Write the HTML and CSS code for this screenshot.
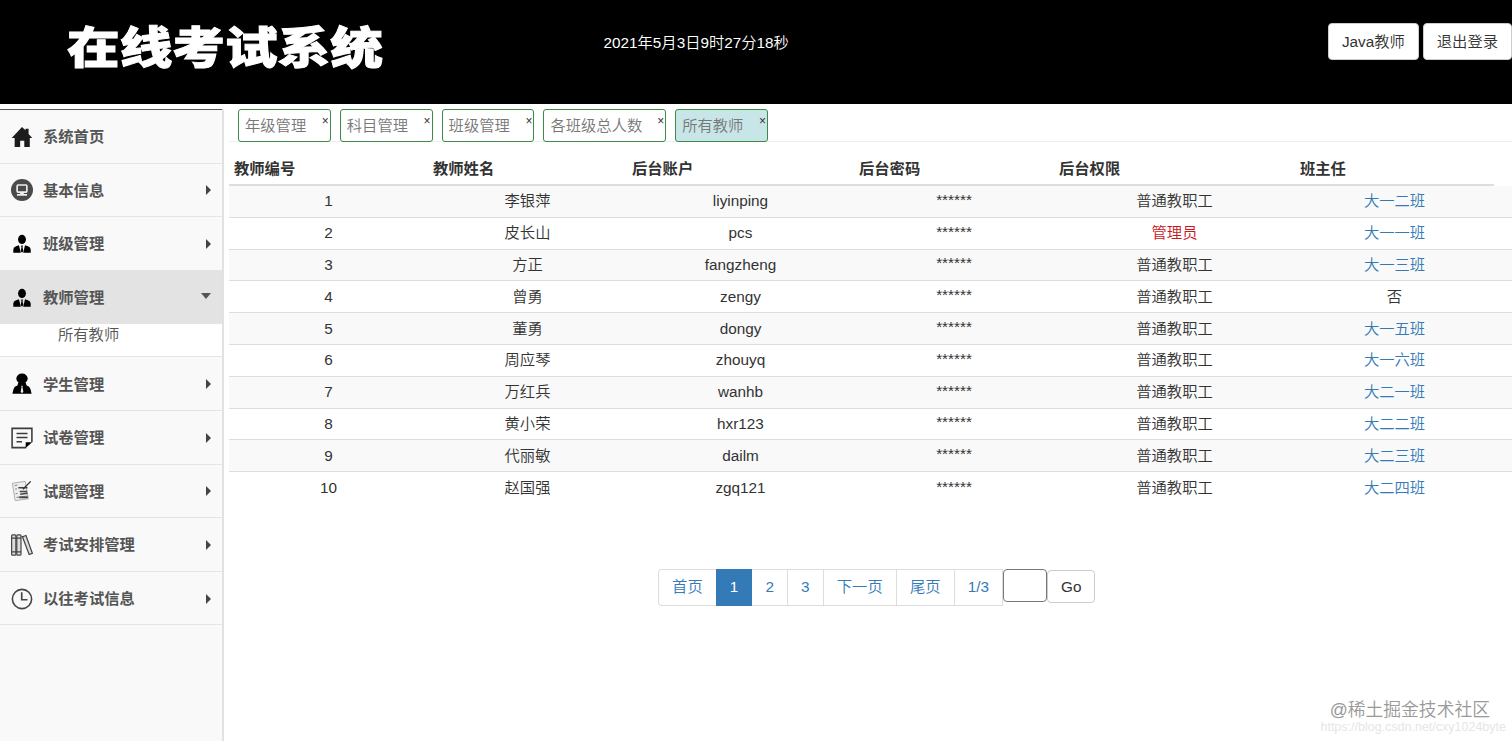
FILE: index.html
```html
<!DOCTYPE html>
<html lang="zh-CN">
<head>
  <meta charset="UTF-8">
  <meta name="viewport" content="width=device-width, initial-scale=1.0">
  <title>在线考试系统</title>
  <link rel="stylesheet" href="styles.css">
</head>
<body>
  <!-- 顶部 -->
  <header class="header">
    <h1 class="logo"><span>在线考试系统</span></h1>
    <div class="time">2021年5月3日9时27分18秒</div>
    <div class="user">
      <button type="button" class="btn">Java教师</button>
      <button type="button" class="btn">退出登录</button>
    </div>
  </header>

  <div class="main">
    <!-- 左侧菜单 -->
    <nav class="sidebar">
      <ul class="menu">
        <li>
          <a class="item">
            <svg viewBox="0 0 24 24"><path fill="#1c1c1c" d="M.8 13 12 1l3.800 3.700V3h3.400v5.600L23.200 13H20.500v10H14.500v-7h-4.500v7H4v-10z"/></svg>
            <span>系统首页</span>
          </a>
        </li>
        <li>
          <a class="item">
            <svg viewBox="0 0 24 24"><circle cx="12" cy="12" r="12" fill="#4a4a4a"/><rect x="6.700" y="6.500" width="10.600" height="7.800" rx="1" fill="none" stroke="#eee" stroke-width="1.800"/><path d="M10 14.500h4v2h-4zM6.500 16.300h11v2h-11z" fill="#eee"/></svg>
            <span>基本信息</span><i class="arrow"></i>
          </a>
        </li>
        <li>
          <a class="item">
            <svg viewBox="0 0 24 24"><ellipse cx="12" cy="7" rx="4.300" ry="5"/><path d="M2.500 21.500v-3.500q0-2.500 3-3.500l3.200-1.200 2 8.200zM21.500 21.500v-3.500q0-2.500-3-3.500l-3.200-1.200-2 8.200zM11 13.700h2l-.4 1.800.8 4-1.400 2-1.400-2 .8-4z"/></svg>
            <span>班级管理</span><i class="arrow"></i>
          </a>
        </li>
        <li>
          <a class="item active">
            <svg viewBox="0 0 24 24"><ellipse cx="12" cy="7" rx="4.300" ry="5"/><path d="M2.500 21.500v-3.500q0-2.500 3-3.500l3.200-1.200 2 8.200zM21.500 21.500v-3.500q0-2.500-3-3.500l-3.200-1.200-2 8.200zM11 13.700h2l-.4 1.800.8 4-1.400 2-1.400-2 .8-4z"/></svg>
            <span>教师管理</span><i class="arrow down"></i>
          </a>
          <ul class="submenu">
            <li>所有教师</li>
          </ul>
        </li>
        <li>
          <a class="item">
            <svg viewBox="0 0 24 24"><ellipse cx="12" cy="6" rx="6.200" ry="5.500"/><path d="M8 10h8l1 3.500q3.500 1 4.200 4l1.300 5h-21l1.300-5q.7-3 4.200-4z"/><path d="m11.200 14h1.600l-.3 1.500 1 5-1.500 1.500-1.500-1.500 1-5z" fill="#eee"/></svg>
            <span>学生管理</span><i class="arrow"></i>
          </a>
        </li>
        <li>
          <a class="item">
            <svg viewBox="0 0 24 24"><path d="M16.500 22.500H1.200V1.500h21.600v15M6 7h12M6 11.500h12M6 16h6" fill="none" stroke="#3c3c3c" stroke-width="1.700"/><path d="M16 23v-6.500h7z"/></svg>
            <span>试卷管理</span><i class="arrow"></i>
          </a>
        </li>
        <li>
          <a class="item">
            <svg viewBox="0 0 24 24"><path d="m1.500 3.500 14-2 3.500 19-14.500 2z" fill="#eee" stroke="#aaa"/><path d="m4 6 3-.5M4.500 10l2-.3M5 15l2-.3M6 19l12-1.500" stroke="#777"/><path d="M8 8.500h10M9.500 12.500h8M9 19h9.500M10 15.500l8-1" stroke="#444" stroke-width="1.800"/><path d="m13 10 8.500-8.500" stroke="#333" stroke-width="1.500"/></svg>
            <span>试题管理</span><i class="arrow"></i>
          </a>
        </li>
        <li>
          <a class="item">
            <svg viewBox="0 0 24 24"><g fill="#ddd" stroke="#444" stroke-width="1.300"><rect x=".7" y="1" width="4.600" height="22" rx="1"/><rect x="6.300" y="1" width="4.600" height="22" rx="1"/><path d="m12.500 3 3.800-1.300 7 19.300-3.500 1.300z"/></g><path d="M.7 4.500h10.200M.7 19.500h10.200M11.500 2.500l2 1" stroke="#444" stroke-width="1.200"/></svg>
            <span>考试安排管理</span><i class="arrow"></i>
          </a>
        </li>
        <li>
          <a class="item">
            <svg viewBox="0 0 24 24"><circle cx="12" cy="12" r="10.500" fill="none" stroke="#444" stroke-width="1.700"/><path d="M11.700 4.500v8.300H18" fill="none" stroke="#444" stroke-width="1.800"/></svg>
            <span>以往考试信息</span><i class="arrow"></i>
          </a>
        </li>
      </ul>
    </nav>

    <!-- 右侧内容 -->
    <section class="content">
      <div class="tabs">
        <div class="tab"><span>年级管理</span><i>×</i></div>
        <div class="tab"><span>科目管理</span><i>×</i></div>
        <div class="tab"><span>班级管理</span><i>×</i></div>
        <div class="tab"><span>各班级总人数</span><i>×</i></div>
        <div class="tab active"><span>所有教师</span><i>×</i></div>
      </div>

      <table class="table">
        <colgroup>
          <col class="w-id"><col class="w-name"><col class="w-account"><col class="w-pwd"><col class="w-role"><col class="w-class"><col class="w-rest">
        </colgroup>
        <thead>
          <tr>
            <th>教师编号</th><th>教师姓名</th><th>后台账户</th><th>后台密码</th><th>后台权限</th><th>班主任</th>
          </tr>
        </thead>
        <tbody>
          <tr><td>1</td><td>李银萍</td><td>liyinping</td><td class="pwd">******</td><td>普通教职工</td><td><a>大一二班</a></td><td></td></tr>
          <tr><td>2</td><td>皮长山</td><td>pcs</td><td class="pwd">******</td><td class="admin">管理员</td><td><a>大一一班</a></td><td></td></tr>
          <tr><td>3</td><td>方正</td><td>fangzheng</td><td class="pwd">******</td><td>普通教职工</td><td><a>大一三班</a></td><td></td></tr>
          <tr><td>4</td><td>曾勇</td><td>zengy</td><td class="pwd">******</td><td>普通教职工</td><td>否</td><td></td></tr>
          <tr><td>5</td><td>董勇</td><td>dongy</td><td class="pwd">******</td><td>普通教职工</td><td><a>大一五班</a></td><td></td></tr>
          <tr><td>6</td><td>周应琴</td><td>zhouyq</td><td class="pwd">******</td><td>普通教职工</td><td><a>大一六班</a></td><td></td></tr>
          <tr><td>7</td><td>万红兵</td><td>wanhb</td><td class="pwd">******</td><td>普通教职工</td><td><a>大二一班</a></td><td></td></tr>
          <tr><td>8</td><td>黄小荣</td><td>hxr123</td><td class="pwd">******</td><td>普通教职工</td><td><a>大二二班</a></td><td></td></tr>
          <tr><td>9</td><td>代丽敏</td><td>dailm</td><td class="pwd">******</td><td>普通教职工</td><td><a>大二三班</a></td><td></td></tr>
          <tr><td>10</td><td>赵国强</td><td>zgq121</td><td class="pwd">******</td><td>普通教职工</td><td><a>大二四班</a></td><td></td></tr>
        </tbody>
      </table>

      <!-- 分页 -->
      <div class="page">
        <ul class="pagination">
          <li>首页</li>
          <li class="active">1</li>
          <li>2</li>
          <li>3</li>
          <li>下一页</li>
          <li>尾页</li>
          <li>1/3</li>
        </ul>
        <input type="text" class="page-input">
        <button type="button" class="btn go">Go</button>
      </div>
    </section>
  </div>

  <div class="watermark">
    <p>@稀土掘金技术社区</p>
    <small>https://blog.csdn.net/cxy1024byte</small>
  </div>
</body>
</html>
```

FILE: styles.css
```css
* {
  box-sizing: border-box;
}
body {
  margin: 0;
  height: 741px;
  overflow: hidden;
  display: flex;
  flex-direction: column;
  font-family: "Liberation Sans", "Noto Sans CJK SC", sans-serif;
  font-size: 15.3px;
  font-weight: 350;
  line-height: 22px;
  color: #333;
  background-color: #fff;
}
ul {
  margin: 0;
  padding: 0;
  list-style: none;
}
i {
  font-style: normal;
}

/* 顶部 */
.header {
  flex: none;
  display: flex;
  align-items: flex-start;
  height: 104px;
  background-color: #000;
  color: #fff;
}
.logo {
  width: 603.5px;
  margin: 0;
  padding: 19px 0 0 67px;
  font-size: 46px;
  font-weight: 900;
  line-height: 60px;
  -webkit-text-stroke: 1px #fff;
}
.logo span {
  display: inline-block;
  transform: scale(1.145, 0.96);
  transform-origin: left;
}
.time {
  padding-top: 32px;
}
.user {
  display: flex;
  gap: 4px;
  margin: 23px 0 0 auto;
}
.btn {
  height: 37px;
  padding: 0 13px;
  font: inherit;
  color: #333;
  background-color: #fff;
  border: 1px solid #ccc;
  border-radius: 4px;
}

.main {
  flex: 1;
  display: flex;
  padding-top: 5px;
}

/* 左侧菜单 */
.sidebar {
  flex: none;
  width: 224px;
  background-color: #f9f9f9;
  border-right: 2px solid #e2e2e2;
}
.menu {
  border-top: 1px solid #555;
}
.item {
  display: flex;
  align-items: center;
  height: 53.6px;
  padding: 1px 11px 0;
  font-weight: bold;
  color: #555;
  border-bottom: 1px solid #e5e5e5;
}
.item.active {
  background-color: #e3e3e3;
}
.item svg {
  width: 22px;
  height: 22px;
  margin-right: 10px;
}
.item span {
  padding-top: 1px;
}
.arrow {
  margin-left: auto;
  border: 5px solid transparent;
  border-left-color: #444;
  border-right-width: 0;
}
.arrow.down {
  margin-bottom: 3px;
  border: 5px solid transparent;
  border-top: 6px solid #555;
  border-bottom-width: 0;
}
.submenu {
  height: 33px;
  padding-left: 58px;
  line-height: 22px;
  color: #555;
  background-color: #fff;
  border-bottom: 1px solid #e5e5e5;
}

/* 右侧内容 */
.content {
  flex: 1;
  min-width: 0;
  padding-left: 5px;
  overflow: hidden;
}
.tabs {
  display: flex;
  gap: 9px;
  height: 33px;
  padding-left: 9px;
  border-bottom: 1px solid #eee;
}
.tab {
  display: flex;
  justify-content: space-between;
  width: 92.8px;
  height: 33px;
  padding: 0 1px 0 6px;
  line-height: 32px;
  color: #777;
  border: 1px solid #3c8a46;
  border-radius: 3px;
}
.tab:nth-child(4) {
  width: 122.8px;
}
.tab i {
  font-size: 12px;
  line-height: 23px;
  color: #333;
}
.tab.active {
  background-color: #c8e6e8;
}

/* 表格 */
.table {
  width: 1484px;
  table-layout: fixed;
  border-collapse: separate;
  border-spacing: 0;
}
.w-id, .w-name {
  width: 199px;
}
.w-account {
  width: 227px;
}
.w-pwd {
  width: 200px;
}
.w-role {
  width: 241px;
}
.w-class {
  width: 199px;
}
th {
  height: 44px;
  padding: 11px 5px 0;
  text-align: left;
  font-weight: bold;
  border-bottom: 2px solid #ddd;
}
td {
  height: 31.8px;
  padding: 0 5px;
  text-align: center;
  border-bottom: 1px solid #ddd;
}
tbody tr:nth-child(odd) {
  background-color: #f9f9f9;
}
tbody tr:last-child td {
  border-bottom: 0;
}
td a {
  color: #337ab7;
}
td.pwd {
  padding-bottom: 3px;
}
td.admin {
  color: #c9151e;
}

/* 分页 */
.page {
  display: flex;
  align-items: flex-start;
  padding: 65px 0 0 429px;
}
.pagination {
  display: flex;
  height: 37px;
  line-height: 34px;
  color: #337ab7;
  border: 1px solid #ddd;
  border-right: 0;
  border-radius: 4px 0 0 4px;
}
.pagination li {
  padding: 0 13.1px;
  border-right: 1px solid #ddd;
}
.pagination li.active {
  margin: -1px 0 -1px -1px;
  padding: 1px 14px;
  color: #fff;
  background-color: #337ab7;
  border-right: 0;
}
.page-input {
  width: 44px;
  height: 33px;
  padding: 0 6px;
  border: 1px solid #777;
  border-radius: 4px;
}
.go {
  height: 33px;
  margin-top: 1px;
  padding-top: 1px;
}

/* 水印 */
.watermark {
  position: absolute;
  right: 6px;
  bottom: 6px;
  text-align: right;
  color: #999;
}
.watermark p {
  margin: 0 16px 0 0;
  font-size: 17.8px;
  line-height: 18px;
}
.watermark small {
  display: block;
  font-size: 12.5px;
  line-height: 16px;
  color: #e6e6e6;
}
```
